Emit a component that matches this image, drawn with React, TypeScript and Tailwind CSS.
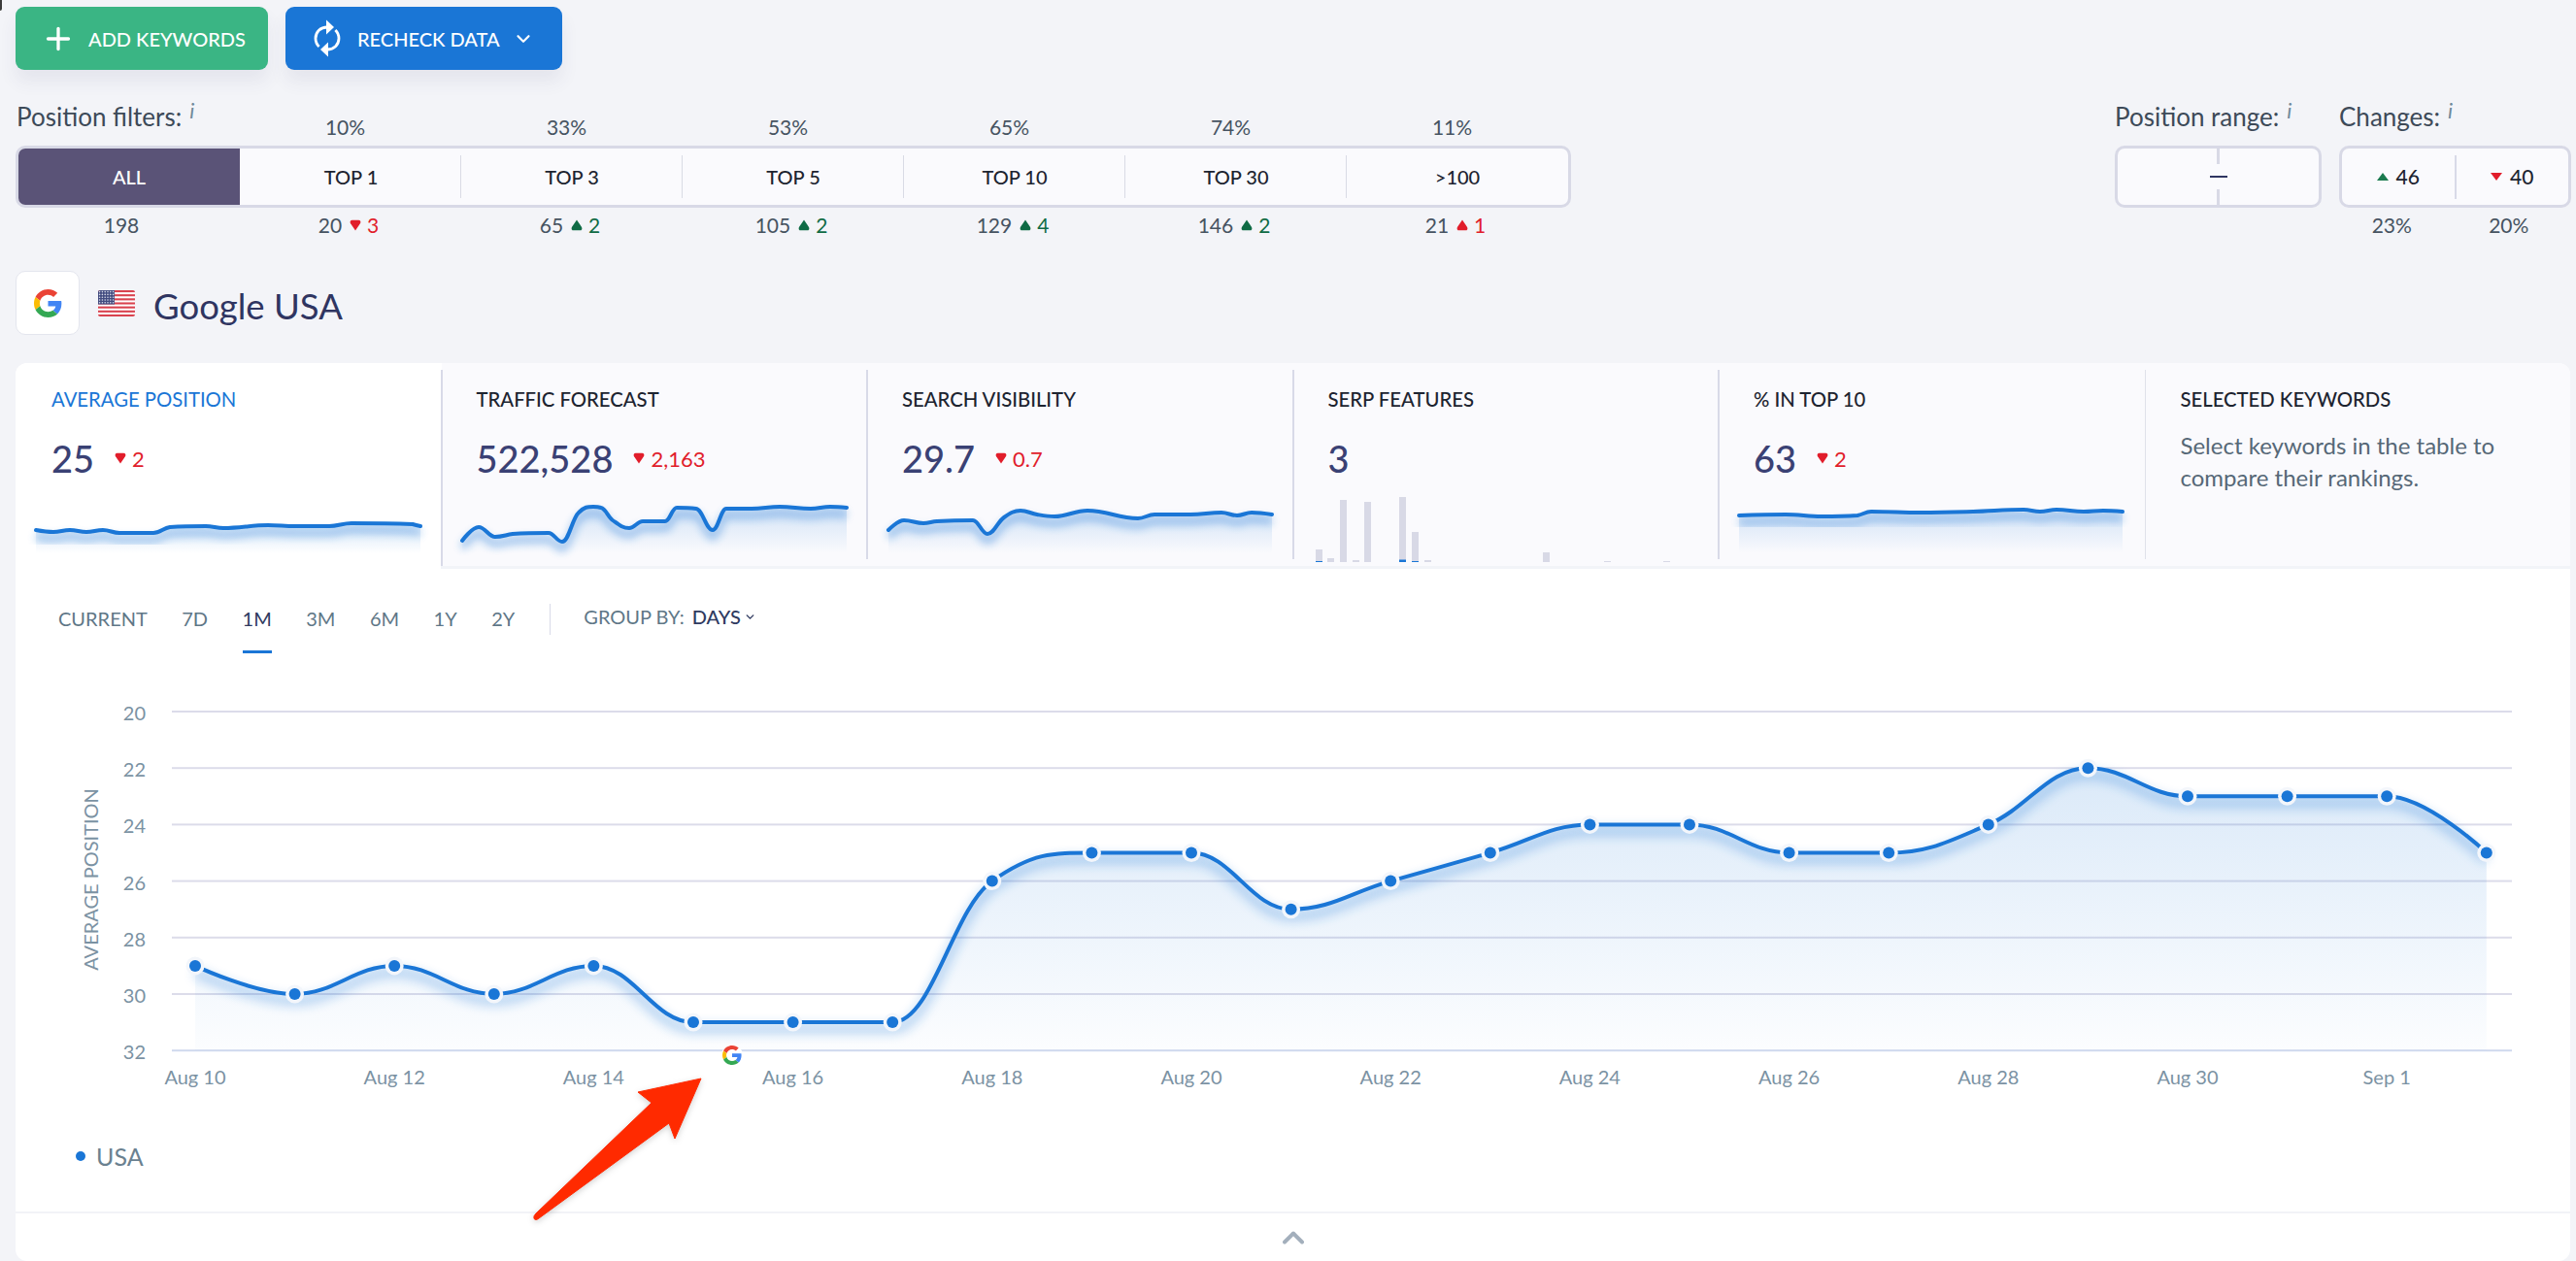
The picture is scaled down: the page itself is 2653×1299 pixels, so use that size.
import { ChevronDown, ChevronUp, Plus } from 'lucide-react';

type Point = [number, number];

const RED = '#e11d2b';
const GREEN = '#0f6b45';
const BLUE = '#1a76d6';

// Same control point rule as a Highcharts spline series
function splinePath(points: Point[], smoothing = 1.5) {
  const denom = smoothing + 1;
  const conts = points.map(([x, y], i) => {
    if (i === 0 || i === points.length - 1) return { lx: x, ly: y, rx: x, ry: y };
    const [px, py] = points[i - 1];
    const [nx, ny] = points[i + 1];
    const lx = (smoothing * x + px) / denom;
    const rx = (smoothing * x + nx) / denom;
    let ly = (smoothing * y + py) / denom;
    let ry = (smoothing * y + ny) / denom;
    const correction = ((ry - ly) * (rx - x)) / (rx - lx) + y - ry;
    ly += correction;
    ry += correction;
    if (ly > py && ly > y) {
      ly = Math.max(py, y);
      ry = 2 * y - ly;
    } else if (ly < py && ly < y) {
      ly = Math.min(py, y);
      ry = 2 * y - ly;
    }
    if (ry > ny && ry > y) {
      ry = Math.max(ny, y);
      ly = 2 * y - ry;
    } else if (ry < ny && ry < y) {
      ry = Math.min(ny, y);
      ly = 2 * y - ry;
    }
    return { lx, ly, rx, ry };
  });

  let d = `M${points[0][0]} ${points[0][1]}`;
  for (let i = 1; i < points.length; i++) {
    const a = conts[i - 1];
    const b = conts[i];
    d += ` C${a.rx} ${a.ry} ${b.lx} ${b.ly} ${points[i][0]} ${points[i][1]}`;
  }
  return d;
}

function GoogleLogo({ size }: { size: number }) {
  return (
    <svg width={size} height={size} viewBox="0 0 48 48">
      <path fill="#EA4335" d="M24 9.5c3.54 0 6.71 1.22 9.21 3.6l6.85-6.85C35.9 2.38 30.47 0 24 0 14.62 0 6.51 5.38 2.56 13.22l7.98 6.19C12.43 13.72 17.74 9.5 24 9.5z" />
      <path fill="#4285F4" d="M46.98 24.55c0-1.57-.15-3.09-.38-4.55H24v9.02h12.94c-.58 2.96-2.26 5.48-4.78 7.18l7.73 6c4.51-4.18 7.09-10.36 7.09-17.65z" />
      <path fill="#FBBC05" d="M10.53 28.59c-.48-1.45-.76-2.99-.76-4.59s.27-3.14.76-4.59l-7.98-6.19C.92 16.46 0 20.12 0 24c0 3.88.92 7.54 2.56 10.78l7.97-6.19z" />
      <path fill="#34A853" d="M24 48c6.48 0 11.93-2.13 15.89-5.81l-7.73-6c-2.15 1.45-4.92 2.3-8.16 2.3-6.26 0-11.57-4.22-13.47-9.91l-7.98 6.19C6.51 42.62 14.62 48 24 48z" />
    </svg>
  );
}

function UsFlag() {
  const stripes = Array.from({ length: 13 }, (_, i) => i);
  const stars = Array.from({ length: 30 }, (_, i) => i);
  return (
    <svg width={38} height={27} viewBox="0 0 38 27" className="rounded-[2px]">
      <rect width="38" height="27" fill="#fff" />
      {stripes
        .filter((i) => i % 2 === 0)
        .map((i) => (
          <rect key={i} y={(i * 27) / 13} width="38" height={27 / 13} fill="#d9424f" />
        ))}
      <rect width="17" height="14.5" fill="#414b7f" />
      {stars.map((i) => (
        <circle key={i} cx={1.6 + (i % 6) * 2.8} cy={1.6 + Math.floor(i / 6) * 2.8} r="0.8" fill="#d9dcea" />
      ))}
    </svg>
  );
}

function RecheckIcon() {
  return (
    <svg width={28} height={39} viewBox="0 0 28 39" fill="none">
      <path d="M14 8C7 8 2 13 2 19.5c0 3.500 1.400 6.400 3.600 8.600" stroke="#fff" strokeWidth="2.8" />
      <path d="M14 31c7 0 12-5 12-11.500 0-3.500-1.400-6.400-3.600-8.600" stroke="#fff" strokeWidth="2.8" />
      <path d="M13 0.5 21 8l-8 7.500z" fill="#fff" />
      <path d="M15 23.500 7 31l8 7.500z" fill="#fff" />
    </svg>
  );
}

// Small rounded marker next to a change value
function Delta({ dir, color }: { dir: 'up' | 'down'; color: string }) {
  return (
    <svg width={12} height={12} viewBox="0 0 11 11" className={dir === 'up' ? 'rotate-180' : ''}>
      <path d="M5.5 10.5 1 4C0 2.4.6.6 2.6.6h5.8C10.400.6 11 2.400 10 4z" fill={color} />
    </svg>
  );
}

function InfoMark() {
  return <span className="-mt-[14px] ml-[8px] text-[22px] italic text-[#6f8a9a]">i</span>;
}

const FILTER_PERCENTS = ['10%', '33%', '53%', '65%', '74%', '11%'];

const FILTERS = [
  { label: 'TOP 1', count: '20', dir: 'down', color: RED, delta: '3' },
  { label: 'TOP 3', count: '65', dir: 'up', color: GREEN, delta: '2' },
  { label: 'TOP 5', count: '105', dir: 'up', color: GREEN, delta: '2' },
  { label: 'TOP 10', count: '129', dir: 'up', color: GREEN, delta: '4' },
  { label: 'TOP 30', count: '146', dir: 'up', color: GREEN, delta: '2' },
  { label: '>100', count: '21', dir: 'up', color: RED, delta: '1' },
] as const;

function Toolbar() {
  return (
    <div className="flex gap-[18px]">
      <button className="flex h-[65px] w-[260px] items-center rounded-[9px] bg-[#3ab584] pl-[26px] text-[20px] font-medium text-white shadow-[0_12px_18px_rgba(60,70,110,0.08)]">
        <Plus size={36} strokeWidth={2.2} />
        <span className="ml-[13px]">ADD KEYWORDS</span>
      </button>
      <button className="flex h-[65px] w-[285px] items-center rounded-[9px] bg-[#1a76d6] pl-[29px] text-[20px] font-medium text-white shadow-[0_12px_18px_rgba(60,70,110,0.08)]">
        <RecheckIcon />
        <span className="ml-[17px]">RECHECK DATA</span>
        <ChevronDown size={22} strokeWidth={2.4} className="ml-[13px]" />
      </button>
    </div>
  );
}

function PositionFilters() {
  return (
    <div className="w-[1602px]">
      <div className="grid h-[48px] grid-cols-7 px-[3px]">
        <div className="-ml-[2px] flex h-[36px] items-center text-[26px] text-[#3d4a58]">
          Position filters:
          <InfoMark />
        </div>
        {FILTER_PERCENTS.map((p, i) => (
          <div key={p + i} className="pr-[11px] pt-[15px] text-center text-[21px] leading-[28px] text-[#465361]">
            {p}
          </div>
        ))}
      </div>
      <div className="grid h-[64px] grid-cols-7 overflow-hidden rounded-[10px] border-[3px] border-[#d8d9e6] bg-[#fafafd] text-[20px] font-medium text-[#1d2430]">
        <div className="flex items-center justify-center bg-[#5a5377] text-white">ALL</div>
        {FILTERS.map((f, i) => (
          <div key={f.label} className="flex items-center">
            <span className={i === 0 ? 'h-[44px] w-px' : '-ml-px h-[44px] w-px bg-[#d9dbe5]'} />
            <span className="flex-1 text-center">{f.label}</span>
          </div>
        ))}
      </div>
      <div className="grid h-[36px] grid-cols-7 px-[3px] text-[21px] text-[#465361]">
        <div className="flex items-center justify-center pr-[16px]">198</div>
        {FILTERS.map((f) => (
          <div key={f.label} className="flex items-center justify-center gap-[8px] pr-[4px]">
            {f.count}
            <span className="flex items-center gap-[6px]" style={{ color: f.color }}>
              <Delta dir={f.dir} color={f.color} />
              {f.delta}
            </span>
          </div>
        ))}
      </div>
    </div>
  );
}

function RangeAndChanges() {
  return (
    <div className="flex gap-[19px]">
      <div className="w-[213px]">
        <div className="flex h-[36px] items-center text-[26px] text-[#3d4a58]">
          Position range:
          <InfoMark />
        </div>
        <div className="mt-[12px] flex h-[64px] flex-col items-center justify-between rounded-[10px] border-[3px] border-[#d8d9e6] bg-[#fafafd]">
          <span className="h-[16px] w-[3px] bg-[#d8d9e6]" />
          <span className="h-[2px] w-[18px] bg-[#2f3561]" />
          <span className="h-[16px] w-[3px] bg-[#d8d9e6]" />
        </div>
      </div>
      <div className="-ml-[1px] w-[239px]">
        <div className="flex h-[36px] items-center text-[26px] text-[#3d4a58]">
          Changes:
          <InfoMark />
        </div>
        <div className="mt-[12px] flex h-[64px] items-center rounded-[10px] border-[3px] border-[#d8d9e6] bg-[#fafafd] text-[21px] font-medium text-[#1d2430]">
          <div className="flex flex-1 items-center justify-center gap-[8px]">
            <svg width={12} height={8} viewBox="0 0 12 8">
              <path d="M6 0 12 8H0z" fill="#1b7a4f" />
            </svg>
            46
          </div>
          <span className="h-[45px] w-[2px] bg-[#d8dae8]" />
          <div className="flex flex-1 items-center justify-center gap-[8px]">
            <svg width={12} height={8} viewBox="0 0 12 8">
              <path d="M6 8 12 0H0z" fill={RED} />
            </svg>
            40
          </div>
        </div>
        <div className="flex h-[36px] items-center text-[21px] text-[#465361]">
          <span className="flex-1 pr-[12px] text-center">23%</span>
          <span className="flex-1 pr-[10px] text-center">20%</span>
        </div>
      </div>
    </div>
  );
}

function Spark({ id, points }: { id: string; points: Point[] }) {
  const line = splinePath(points);
  const area = `${line} L${points[points.length - 1][0]} 76 L${points[0][0]} 76 Z`;
  return (
    <svg width={436} height={89} viewBox="0 0 436 89" className="block">
      <defs>
        <linearGradient id={`${id}-fill`} x1="0" y1="0" x2="0" y2="1">
          <stop offset="0" stopColor={BLUE} stopOpacity="0.18" />
          <stop offset="1" stopColor={BLUE} stopOpacity="0" />
        </linearGradient>
        <filter id={`${id}-blur`} x="-5%" y="-50%" width="110%" height="200%">
          <feGaussianBlur stdDeviation="4" />
        </filter>
      </defs>
      <path d={area} fill={`url(#${id}-fill)`} />
      <path d={line} fill="none" stroke={BLUE} strokeWidth="7" opacity="0.4" transform="translate(0 7)" filter={`url(#${id}-blur)`} />
      <path d={line} fill="none" stroke={BLUE} strokeWidth="4" strokeLinecap="round" strokeLinejoin="round" />
    </svg>
  );
}

const SERP_BARS: { x: number; top: number; mark?: number }[] = [
  { x: 22, top: 72, mark: 1 },
  { x: 34, top: 81 },
  { x: 47, top: 21 },
  { x: 60, top: 83 },
  { x: 72, top: 23 },
  { x: 108, top: 18, mark: 2.5 },
  { x: 121, top: 54, mark: 1 },
  { x: 134, top: 83 },
  { x: 256, top: 75 },
  { x: 319, top: 84 },
  { x: 380, top: 84 },
];

function SerpBars() {
  return (
    <svg width={436} height={89} viewBox="0 0 436 89" className="block">
      {SERP_BARS.map((b) => (
        <g key={b.x}>
          <rect x={b.x} y={b.top} width="7" height={85 - b.top} fill="#d8d9e6" />
          {b.mark && <rect x={b.x} y={85 - b.mark} width="7" height={b.mark} fill={BLUE} />}
        </g>
      ))}
    </svg>
  );
}

const METRICS: { id: string; title: string; value: string; delta?: string; points?: Point[] }[] = [
  {
    id: 'avg',
    title: 'AVERAGE POSITION',
    value: '25',
    delta: '2',
    points: [[19, 52], [37, 54], [54, 52], [71, 54], [88, 52], [105, 55], [140, 55], [157, 49], [194, 48], [212, 50], [258, 47], [286, 48], [321, 48], [344, 45], [407, 46], [415, 48]],
  },
  {
    id: 'traffic',
    title: 'TRAFFIC FORECAST',
    value: '522,528',
    delta: '2,163',
    points: [[20, 63], [37, 49], [54, 59], [72, 56], [109, 55], [123, 64], [140, 34], [155, 28], [163, 29], [175, 42], [192, 50], [206, 43], [229, 43], [241, 29], [261, 30], [278, 52], [292, 30], [318, 30], [347, 28], [379, 30], [399, 28], [416, 29]],
  },
  {
    id: 'visibility',
    title: 'SEARCH VISIBILITY',
    value: '29.7',
    delta: '0.7',
    points: [[21, 52], [37, 42], [57, 45], [71, 43], [108, 42], [123, 56], [140, 39], [157, 32], [174, 36], [192, 38], [226, 32], [278, 40], [295, 36], [332, 36], [364, 34], [380, 37], [395, 34], [416, 36]],
  },
  { id: 'serp', title: 'SERP FEATURES', value: '3' },
  {
    id: 'top10',
    title: '% IN TOP 10',
    value: '63',
    delta: '2',
    points: [[20, 37], [68, 36], [105, 38], [142, 37], [156, 33], [207, 34], [261, 33], [313, 31], [330, 33], [347, 31], [375, 33], [395, 32], [415, 33]],
  },
];

function MetricTabs() {
  return (
    <div className="grid h-[212px] grid-cols-6">
      {METRICS.map((m, i) => (
        <div key={m.id} className={i === 0 ? 'flex h-[212px] bg-white' : 'flex h-[209px] bg-[#fafafd]'}>
          <span className={i === 0 ? 'w-[2px]' : i === 1 ? '-ml-[1px] mt-[7px] w-[2px] bg-[#d8dae8]' : 'mt-[7px] mb-[7px] -ml-[1px] w-[2px] bg-[#d8dae8]'} />
          <div className="flex-1">
            <div className="pl-[35px] pt-[25px]">
              <div className={i === 0 ? 'text-[20.3px] leading-[24px] text-[#1a76d6]' : 'text-[20.3px] font-medium leading-[24px] text-[#1d2430]'}>{m.title}</div>
              <div className="mt-[27px] flex h-[44px] items-center">
                <span className="text-[38px] font-medium leading-[44px] text-[#3a4174]">{m.value}</span>
                {m.delta && (
                  <span className="ml-[21px] flex items-center gap-[6px] text-[22px] text-[#e11d2b]">
                    <Delta dir="down" color={RED} />
                    {m.delta}
                  </span>
                )}
              </div>
            </div>
            {m.points ? <Spark id={m.id} points={m.points} /> : <SerpBars />}
          </div>
        </div>
      ))}
      <div className="flex h-[209px] bg-[#fafafd]">
        <span className="mt-[7px] mb-[7px] w-px bg-[#dfe1ea]" />
        <div className="pl-[36px] pt-[25px]">
          <div className="text-[20.3px] font-medium leading-[24px] text-[#1d2430]">SELECTED KEYWORDS</div>
          <p className="mt-[19px] text-[24px] leading-[33px] text-[#566877]">
            Select keywords in the table to
            <br />
            compare their rankings.
          </p>
        </div>
      </div>
    </div>
  );
}

const RANGES = ['CURRENT', '7D', '1M', '3M', '6M', '1Y', '2Y'];

function RangeBar() {
  return (
    <div className="flex pl-[44px] text-[20px]">
      <div className="mt-[35px] flex gap-[35.5px]">
        {RANGES.map((r) => (
          <div
            key={r}
            className={
              r === '1M'
                ? 'h-[52px] border-b-[3px] border-[#1a76d6] leading-[32px] text-[#2f3a5f]'
                : 'h-[52px] leading-[32px] text-[#5f7787]'
            }
          >
            {r}
          </div>
        ))}
      </div>
      <span className="ml-[36px] mt-[36px] h-[32px] w-px bg-[#d8dae8]" />
      <div className="ml-[34px] mt-[33px] flex h-[32px] items-center text-[#5f7787]">
        GROUP BY:
        <span className="ml-[8px] font-medium text-[#2f3a5f]">DAYS</span>
        <ChevronDown size={13} strokeWidth={2.6} className="ml-[3px] text-[#2f3a5f]" />
      </div>
    </div>
  );
}

const CHART_VALUES = [29, 30, 29, 30, 29, 31, 31, 31, 26, 25, 25, 27, 26, 25, 24, 24, 25, 25, 24, 22, 23, 23, 23, 25];
const CHART_LABELS = ['Aug 10', 'Aug 12', 'Aug 14', 'Aug 16', 'Aug 18', 'Aug 20', 'Aug 22', 'Aug 24', 'Aug 26', 'Aug 28', 'Aug 30', 'Sep 1'];
const GRID_VALUES = [20, 22, 24, 26, 28, 30, 32];

const chartX = (i: number) => 201 + i * 102.6;
const chartY = (v: number) => 732 + (v - 20) * 29.1;

function PositionChart() {
  const points = CHART_VALUES.map((v, i): Point => [chartX(i), chartY(v)]);
  const line = splinePath(points);
  const area = `${line} L${chartX(23)} ${chartY(32)} L${chartX(0)} ${chartY(32)} Z`;

  return (
    <svg width={2631} height={488} viewBox="16 672 2631 488" className="block">
      <defs>
        <linearGradient id="chart-fill" gradientUnits="userSpaceOnUse" x1="0" y1="790" x2="0" y2="1080">
          <stop offset="0" stopColor={BLUE} stopOpacity="0.16" />
          <stop offset="0.55" stopColor={BLUE} stopOpacity="0.08" />
          <stop offset="1" stopColor={BLUE} stopOpacity="0.015" />
        </linearGradient>
        <filter id="chart-blur" x="-2%" y="-10%" width="104%" height="130%">
          <feGaussianBlur stdDeviation="6" />
        </filter>
      </defs>

      {GRID_VALUES.map((v) => (
        <g key={v}>
          <rect x="177" y={chartY(v) - 1} width="2410" height="2" fill={v === 32 ? '#d0d9ee' : '#dcdcea'} />
          <text x="150" y={chartY(v) + 9} textAnchor="end" fontSize="20" fill="#7b92a3">
            {v}
          </text>
        </g>
      ))}
      <text transform="translate(101 905) rotate(-90)" textAnchor="middle" fontSize="20" fill="#7b92a3">
        AVERAGE POSITION
      </text>

      <path d={area} fill="url(#chart-fill)" />
      <path d={line} fill="none" stroke={BLUE} strokeWidth="8" opacity="0.36" transform="translate(0 7)" filter="url(#chart-blur)" />
      <path d={line} fill="none" stroke={BLUE} strokeWidth="4" />
      {points.map(([x, y]) => (
        <g key={x}>
          <circle cx={x} cy={y} r="9.5" fill="#f3f6fb" />
          <circle cx={x} cy={y} r="6" fill={BLUE} />
        </g>
      ))}

      {CHART_LABELS.map((label, i) => (
        <text key={label} x={chartX(i * 2)} y="1116" textAnchor="middle" fontSize="20" fill="#7b92a3">
          {label}
        </text>
      ))}

      <svg x="743" y="1075" width="22" height="22" viewBox="0 0 22 22">
        <circle cx="11" cy="11" r="11" fill="#fff" />
        <g transform="translate(1 1) scale(0.4167)">
          <path fill="#EA4335" d="M24 9.5c3.54 0 6.71 1.22 9.21 3.6l6.85-6.85C35.9 2.38 30.47 0 24 0 14.62 0 6.51 5.38 2.56 13.22l7.98 6.19C12.43 13.72 17.74 9.5 24 9.5z" />
          <path fill="#4285F4" d="M46.98 24.55c0-1.57-.15-3.09-.38-4.55H24v9.02h12.94c-.58 2.96-2.26 5.48-4.78 7.18l7.73 6c4.51-4.18 7.09-10.36 7.09-17.65z" />
          <path fill="#FBBC05" d="M10.53 28.59c-.48-1.45-.76-2.99-.76-4.59s.27-3.14.76-4.59l-7.98-6.19C.92 16.46 0 20.12 0 24c0 3.88.92 7.54 2.56 10.78l7.97-6.19z" />
          <path fill="#34A853" d="M24 48c6.48 0 11.93-2.13 15.89-5.81l-7.73-6c-2.15 1.45-4.92 2.3-8.16 2.3-6.26 0-11.57-4.22-13.47-9.91l-7.98 6.19C6.51 42.62 14.62 48 24 48z" />
        </g>
      </svg>
    </svg>
  );
}

function CalloutArrow() {
  return (
    <svg width={190} height={165} viewBox="0 0 190 165" className="absolute left-[540px] top-[1102px] drop-shadow-[0_2px_3px_rgba(0,0,0,0.18)]">
      <path
        d="M182 9 155 71 149 55 15 153 Q11 156 10 153 Q9 151 12 148 L131 34 117 23z"
        fill="#ff2a00"
        stroke="#ff2a00"
        strokeWidth="1"
        strokeLinejoin="round"
      />
    </svg>
  );
}

export default function App() {
  return (
    <div className="relative h-[1299px] w-[2653px] overflow-hidden bg-[#f3f4f8] pl-[16px] pt-[7px] font-[Lato,'Noto_Sans',sans-serif]">
      <span className="absolute left-0 top-0 h-[11px] w-[2px] rounded-br-[2px] bg-[#3a3a3a]" />

      <Toolbar />

      <div className="mt-[30px] flex justify-between pr-[5px]">
        <PositionFilters />
        <RangeAndChanges />
      </div>

      <div className="mt-[29px] flex h-[66px] items-center">
        <div className="flex h-[66px] w-[66px] items-center justify-center rounded-[10px] border border-[#e4e6ee] bg-white">
          <GoogleLogo size={29} />
        </div>
        <span className="ml-[19px]">
          <UsFlag />
        </span>
        <span className="ml-[19px] pt-[6px] text-[36.5px] text-[#2f3561]">Google USA</span>
      </div>

      <div className="mt-[29px] flex h-[925px] w-[2631px] flex-col overflow-hidden rounded-[12px] bg-white">
        <MetricTabs />
        <div className="-mt-[3px] ml-[438px] h-[3px] bg-[#f2f4f8]" />
        <RangeBar />
        <PositionChart />
        <div className="flex h-[87px] items-start pl-[62px] pt-[13px] text-[25px] text-[#6b8190]">
          <span className="mt-[12px] h-[10px] w-[10px] rounded-full bg-[#1a76d6]" />
          <span className="ml-[11px] leading-[34px]">USA</span>
        </div>
        <div className="flex h-[51px] items-center justify-center border-t-2 border-[#f2f3f7] text-[#a3afbc]">
          <ChevronUp size={36} strokeWidth={2.6} />
        </div>
      </div>

      <CalloutArrow />
    </div>
  );
}
